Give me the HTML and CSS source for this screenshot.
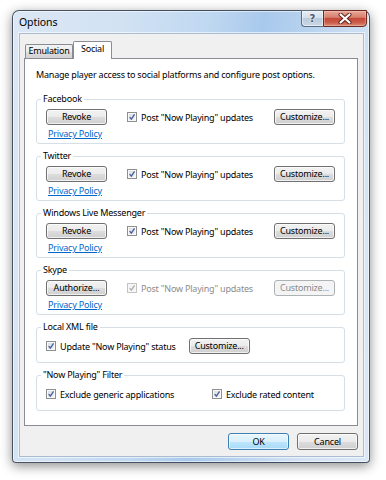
FILE: index.html
```html
<!DOCTYPE html>
<html>
<head>
<meta charset="utf-8">
<title>Options</title>
<link rel="stylesheet" href="styles.css">
</head>
<body>
<div class="window">
  <div class="titlebar">
    <span class="title">Options</span>
  </div>
  <div class="caption">
    <div class="cap-help">?</div>
    <div class="cap-close">
      <svg width="14" height="11" viewBox="0 0 14 11"><path d="M2.5 1.5 L11.5 9.5 M11.5 1.5 L2.5 9.5" stroke="#5a1e16" stroke-width="4" stroke-linecap="round"/><path d="M2.5 1.5 L11.5 9.5 M11.5 1.5 L2.5 9.5" stroke="#ffffff" stroke-width="2.2" stroke-linecap="round"/></svg>
    </div>
  </div>
  <div class="client">
    <div class="tabs">
      <div class="tab tab-emu">Emulation</div>
      <div class="tab tab-active">Social</div>
    </div>
    <div class="panel">
      <p class="desc">Manage player access to social platforms and configure post options.</p>

      <fieldset class="group">
        <legend>Facebook</legend>
        <div class="group-body">
          <div class="row">
            <button class="btn">Revoke</button>
            <label class="check check-post"><span class="box"><svg viewBox="0 0 10 10"><path d="M2 5.2 L4.2 7.6 L8.2 1.8" class="tick"/></svg></span>Post "Now Playing" updates</label>
            <button class="btn btn-right">Customize...</button>
          </div>
          <a class="link" href="#">Privacy Policy</a>
        </div>
      </fieldset>

      <fieldset class="group">
        <legend>Twitter</legend>
        <div class="group-body">
          <div class="row">
            <button class="btn">Revoke</button>
            <label class="check check-post"><span class="box"><svg viewBox="0 0 10 10"><path d="M2 5.2 L4.2 7.6 L8.2 1.8" class="tick"/></svg></span>Post "Now Playing" updates</label>
            <button class="btn btn-right">Customize...</button>
          </div>
          <a class="link" href="#">Privacy Policy</a>
        </div>
      </fieldset>

      <fieldset class="group">
        <legend>Windows Live Messenger</legend>
        <div class="group-body">
          <div class="row">
            <button class="btn">Revoke</button>
            <label class="check check-post"><span class="box"><svg viewBox="0 0 10 10"><path d="M2 5.2 L4.2 7.6 L8.2 1.8" class="tick"/></svg></span>Post "Now Playing" updates</label>
            <button class="btn btn-right">Customize...</button>
          </div>
          <a class="link" href="#">Privacy Policy</a>
        </div>
      </fieldset>

      <fieldset class="group">
        <legend>Skype</legend>
        <div class="group-body">
          <div class="row">
            <button class="btn">Authorize...</button>
            <label class="check check-post disabled"><span class="box"><svg viewBox="0 0 10 10"><path d="M2 5.2 L4.2 7.6 L8.2 1.8" class="tick"/></svg></span>Post "Now Playing" updates</label>
            <button class="btn btn-right btn-disabled" disabled>Customize...</button>
          </div>
          <a class="link" href="#">Privacy Policy</a>
        </div>
      </fieldset>

      <fieldset class="group group-short">
        <legend>Local XML file</legend>
        <div class="group-body">
          <div class="row">
            <label class="check"><span class="box"><svg viewBox="0 0 10 10"><path d="M2 5.2 L4.2 7.6 L8.2 1.8" class="tick"/></svg></span>Update "Now Playing" status</label>
            <button class="btn btn-xml">Customize...</button>
          </div>
        </div>
      </fieldset>

      <fieldset class="group group-short">
        <legend>"Now Playing" Filter</legend>
        <div class="group-body">
          <div class="row row-grid">
            <label class="check"><span class="box"><svg viewBox="0 0 10 10"><path d="M2 5.2 L4.2 7.6 L8.2 1.8" class="tick"/></svg></span>Exclude generic applications</label>
            <label class="check"><span class="box"><svg viewBox="0 0 10 10"><path d="M2 5.2 L4.2 7.6 L8.2 1.8" class="tick"/></svg></span>Exclude rated content</label>
          </div>
        </div>
      </fieldset>
    </div>
    <div class="footer">
      <button class="btn btn-default">OK</button>
      <button class="btn">Cancel</button>
    </div>
  </div>
</div>
</body>
</html>
```

FILE: styles.css
```css
* {
  box-sizing: border-box;
}

html, body {
  margin: 0;
  padding: 0;
  background: #ffffff;
}

body {
  width: 386px;
  height: 480px;
  overflow: hidden;
  font-family: "Noto Sans", "Open Sans", sans-serif;
  font-size: 9px;
  letter-spacing: -0.2px;
  color: #000000;
}

.window {
  position: relative;
  margin: 10px 0 0 12px;
  width: 358px;
  height: 453px;
  border: 1px solid rgba(35, 45, 60, 0.8);
  border-radius: 7px 7px 4px 4px;
  background: linear-gradient(100deg, #dbe7f4 0%, #d2e2f3 25%, #c0d8f1 45%, #a9c9ec 58%, #b7d2ef 68%, #d4e3f4 85%, #dbe7f4 100%);
  box-shadow: 0 3px 12px rgba(0, 0, 0, 0.45), inset 0 0 0 1px rgba(255, 255, 255, 0.55);
  padding: 0 5px 5px 6px;
  display: flex;
  flex-direction: column;
}

.titlebar {
  height: 22px;
  flex: none;
}

.title {
  display: block;
  margin-top: 5px;
  font-size: 10.5px;
  line-height: 12px;
  letter-spacing: -0.1px;
  color: #000000;
}

.caption {
  position: absolute;
  top: -1px;
  right: 2px;
  display: flex;
  height: 17px;
}

.cap-help {
  width: 22px;
  height: 17px;
  border: 1px solid #5b6b80;
  border-right: none;
  border-radius: 0 0 0 4px;
  background: linear-gradient(#e6edf5 0%, #d3dfec 45%, #bccbdc 50%, #c9d7e7 100%);
  box-shadow: inset 0 0 0 1px rgba(255, 255, 255, 0.5);
  text-align: center;
  font-family: "DejaVu Sans", sans-serif;
  font-weight: bold;
  font-size: 10px;
  line-height: 15px;
  letter-spacing: 0;
  color: #4a5768;
  text-shadow: 0 0 2px #ffffff;
}

.cap-close {
  width: 44px;
  height: 17px;
  border: 1px solid #6a2a22;
  border-radius: 0 0 4px 0;
  background: linear-gradient(#e8a899 0%, #d8806d 42%, #c5493a 50%, #c95b48 75%, #dc8b76 100%);
  box-shadow: inset 0 0 0 1px rgba(255, 220, 210, 0.35);
  display: flex;
  align-items: center;
  justify-content: center;
}

.client {
  flex: 1;
  background: #f0f0f0;
  border: 1px solid #a9bcd1;
  box-shadow: 0 0 0 1px rgba(255, 255, 255, 0.6);
  padding: 7px 5px 6px 4px;
  display: flex;
  flex-direction: column;
}

.tabs {
  display: flex;
  align-items: flex-end;
  height: 17px;
  padding-left: 1px;
}

.tab {
  border: 1px solid #898c95;
  border-bottom: none;
  border-radius: 2px 2px 0 0;
  text-align: center;
  line-height: 12px;
}

.tab-emu {
  width: 48px;
  height: 14px;
  background: linear-gradient(#f3f3f3 0%, #ebebeb 50%, #dedede 51%, #d3d3d3 100%);
}

.tab-active {
  position: relative;
  z-index: 1;
  width: 39px;
  height: 18px;
  margin-bottom: -1px;
  padding-top: 1px;
  background: #ffffff;
}

.panel {
  width: 334px;
  height: 368px;
  border: 1px solid #898c95;
  background: #ffffff;
  padding: 9px 12px 0 11px;
}

.desc {
  margin: 0 0 12px 0;
  line-height: 13px;
}

.group {
  margin: 0;
  padding: 0;
  min-width: 0;
  border: 1px solid #d5dfe5;
  border-radius: 3px;
}

.group + .group {
  margin-top: 6px;
}

.group legend {
  margin-left: 4px;
  padding: 0 2px;
  line-height: 12px;
}

.group-body {
  padding: 4px 9px 3px 9px;
}

.group-short .group-body {
  padding: 5px 9px 8px 9px;
}

.row {
  display: flex;
  align-items: center;
  height: 16px;
}

.row-grid {
  display: grid;
  grid-template-columns: 166px 1fr;
}

.btn {
  width: 61px;
  height: 16px;
  padding: 0;
  font-family: inherit;
  font-size: 9px;
  letter-spacing: -0.2px;
  line-height: 14px;
  color: #000000;
  border: 1px solid #707070;
  border-radius: 3px;
  background: linear-gradient(#f2f2f2 0%, #ebebeb 50%, #dddddd 51%, #cfcfcf 100%);
  box-shadow: inset 0 0 0 1px rgba(255, 255, 255, 0.7);
}

.btn-right {
  margin-left: auto;
}

.btn-xml {
  margin-left: 13px;
}

.btn-disabled {
  border-color: #adb2b5;
  background: #f4f4f4;
  box-shadow: none;
  color: #8a8a8a;
}

.btn-default {
  height: 17px;
  border-color: #3c7fb1;
  background: linear-gradient(#eaf6fd 0%, #d9f0fc 50%, #bee6fd 51%, #a7d9f5 100%);
  box-shadow: inset 0 0 0 1px rgba(255, 255, 255, 0.6);
}

.check {
  display: flex;
  align-items: center;
  white-space: nowrap;
  line-height: 13px;
}

.check-post {
  margin-left: 20px;
}

.box {
  width: 10px;
  height: 10px;
  flex: none;
  margin-right: 4px;
  border: 1px solid #8e8f8f;
  background: linear-gradient(135deg, #d9dde4 0%, #f4f5f7 100%);
  box-shadow: inset 0 0 0 1px #f8f8f8;
  display: flex;
}

.box svg {
  width: 8px;
  height: 8px;
}

.tick {
  fill: none;
  stroke: #4a5e9a;
  stroke-width: 1.7;
}

.disabled {
  color: #8d8d8d;
}

.disabled .box {
  border-color: #c3c3c3;
  background: #f4f4f4;
}

.disabled .tick {
  stroke: #b0b0b0;
}

.link {
  display: block;
  width: max-content;
  margin: 2px 0 0 2px;
  line-height: 13px;
  color: #0066cc;
  text-decoration: underline;
}

.footer {
  display: flex;
  justify-content: flex-end;
  gap: 8px;
  margin-top: 7px;
}

.footer .btn {
  height: 17px;
}
```
